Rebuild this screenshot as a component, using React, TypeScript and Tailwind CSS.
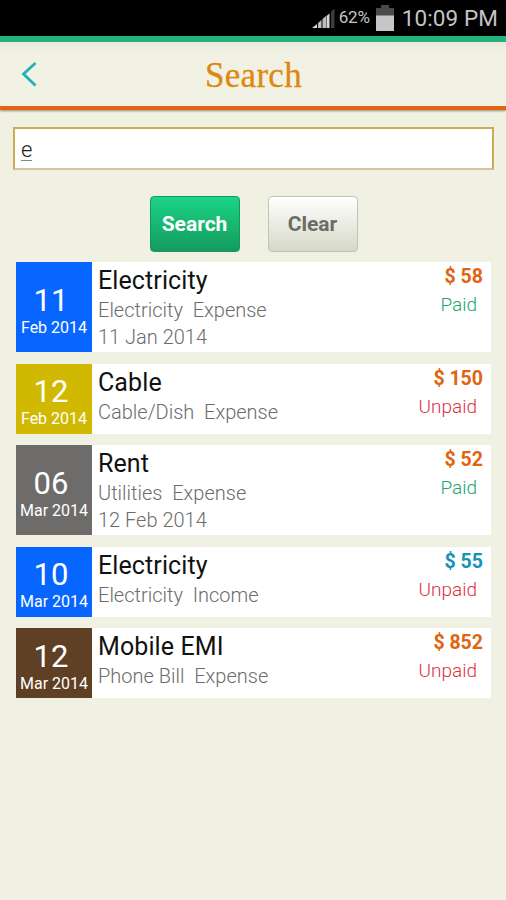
import React from "react";
import { clsx } from "clsx";

type Entry = {
  day: string;
  month: string;
  color: string;
  title: string;
  category: string;
  date?: string;
  amount: string;
  income?: boolean;
  paid?: boolean;
};

const entries: Entry[] = [
  {
    day: "11",
    month: "Feb 2014",
    color: "bg-[#0766ff]",
    title: "Electricity",
    category: "Electricity  Expense",
    date: "11 Jan 2014",
    amount: "$ 58",
    paid: true,
  },
  {
    day: "12",
    month: "Feb 2014",
    color: "bg-[#d1b902]",
    title: "Cable",
    category: "Cable/Dish  Expense",
    amount: "$ 150",
  },
  {
    day: "06",
    month: "Mar 2014",
    color: "bg-[#6d6c6a]",
    title: "Rent",
    category: "Utilities  Expense",
    date: "12 Feb 2014",
    amount: "$ 52",
    paid: true,
  },
  {
    day: "10",
    month: "Mar 2014",
    color: "bg-[#0766ff]",
    title: "Electricity",
    category: "Electricity  Income",
    amount: "$ 55",
    income: true,
  },
  {
    day: "12",
    month: "Mar 2014",
    color: "bg-[#5f4024]",
    title: "Mobile EMI",
    category: "Phone Bill  Expense",
    amount: "$ 852",
  },
];

const StatusBar = () => (
  <div className="flex h-9 items-center justify-end bg-black pr-2 text-[#c4c4c4]">
    <svg width="24" height="22" viewBox="0 0 24 22" className="mt-0.5 mr-[3px]">
      <path d="M0 20 L5 16 V20Z" fill="#d8d8d8" />
      <path d="M6 15 L9.5 12 V20 H6Z" fill="#bdbdbd" />
      <path d="M10.500 11 L14 8 V20 H10.500Z" fill="#bdbdbd" />
      <path d="M14.500 8 L17.500 5.500 V20 H14.500Z" fill="#d8d8d8" />
      <path d="M19 4 L22.500 0.500 V20 H19Z" fill="#3c3c3c" />
    </svg>
    <span className="w-[32px] text-[17px] tracking-[-0.2px]">62%</span>
    <svg width="18" height="26" viewBox="0 0 18 26" className="ml-[5px]">
      <path d="M5 0 H13 V3 H18 V11 H0 V3 H5Z" fill="#4a4a4a" />
      <path d="M0 10.500 H18 V26 H0Z" fill="#c6c6c6" />
    </svg>
    <span className="ml-2 pt-0.5 whitespace-nowrap text-[22.500px] tracking-[0.1px]">10:09 PM</span>
  </div>
);

const Header = () => (
  <header className="flex h-[74px] items-center border-t-[6px] border-b-4 border-t-[#22b27c] border-b-[#e2640f] bg-gradient-to-b from-[#ebeadc] to-[#f1f2e4] to-15% shadow-[0_1px_2px_rgba(90,70,40,0.6)]">
    <svg
      width="16"
      height="26"
      viewBox="0 0 16 26"
      fill="none"
      stroke="#1eb2b9"
      strokeWidth="2.8"
      className="ml-[21px]"
    >
      <path d="M14.500 2 L2.500 13 L14.500 24.500" />
    </svg>
    <h1 className="flex-1 pt-0.5 pr-[36px] text-center font-['Liberation_Serif',serif] text-[35px] leading-none tracking-[0.3px] text-[#dd8911] [-webkit-text-stroke:0.3px_#dd8911]">
      Search
    </h1>
  </header>
);

const EntryRow: React.FC<{ entry: Entry }> = ({ entry }) => {
  return (
    <li className={clsx("flex bg-white", entry.date ? "h-[90px]" : "h-[70px]")}>
      <div
        className={clsx(
          "flex w-[76px] flex-col items-center justify-center text-white",
          entry.color
        )}
      >
        <span className="mt-2 mr-1.5 text-[31px] leading-[32px]">{entry.day}</span>
        <span className="mt-px text-[16px] leading-[20px] whitespace-nowrap">{entry.month}</span>
      </div>

      <div className="flex-1 pt-1 pl-1.5">
        <h2 className="text-[25px] leading-[30px] tracking-[0.1px] text-[#111]">{entry.title}</h2>
        <p className="text-[20px] leading-[28px] font-light whitespace-pre text-[#6c6c6c]">
          {entry.category}
        </p>
        {entry.date && (
          <p className="text-[20px] leading-[26px] font-light text-[#6c6c6c]">{entry.date}</p>
        )}
      </div>

      <div className="pt-0.5 pr-2 text-right">
        <p
          className={clsx(
            "text-[19.500px] leading-[26px] font-bold",
            entry.income ? "text-[#1592b8]" : "text-[#e2640f]"
          )}
        >
          {entry.amount}
        </p>
        <p
          className={clsx(
            "pr-1.5 text-[19px] leading-[29px] font-light",
            entry.paid ? "text-[#22a56c]" : "text-[#dd3040]"
          )}
        >
          {entry.paid ? "Paid" : "Unpaid"}
        </p>
      </div>
    </li>
  );
};

export default function App() {
  return (
    <div className="min-h-[900px] w-[506px] bg-[#f0f1e3] font-['Roboto',sans-serif]">
      <StatusBar />
      <Header />

      <main className="pt-[17px]">
        <div className="mr-3 ml-[13px] flex h-[43px] items-center border-2 border-[#cdaa55] border-b-[#d9c39a] bg-white pl-1.5">
          <span className="mt-0.5 border-b border-[#888] text-[22px] leading-[21px] font-light text-[#222]">
            e
          </span>
        </div>

        <div className="mt-[26px] flex justify-center gap-7 pl-px text-[21px] font-bold">
          <button className="h-14 w-[90px] rounded-[4px] border border-[#17985c] bg-gradient-to-b from-[#1bd586] to-[#149b5d] pt-0.5 text-white">
            Search
          </button>
          <button className="h-14 w-[90px] rounded-[4px] border border-[#c0c2b4] bg-gradient-to-b from-white to-[#d6d9c7] pt-0.5 text-[#6b6b67]">
            Clear
          </button>
        </div>

        <ul className="mt-[10.400px] mr-[15px] ml-4 flex flex-col gap-[11.500px]">
          {entries.map((entry, i) => (
            <EntryRow key={i} entry={entry} />
          ))}
        </ul>
      </main>
    </div>
  );
}
